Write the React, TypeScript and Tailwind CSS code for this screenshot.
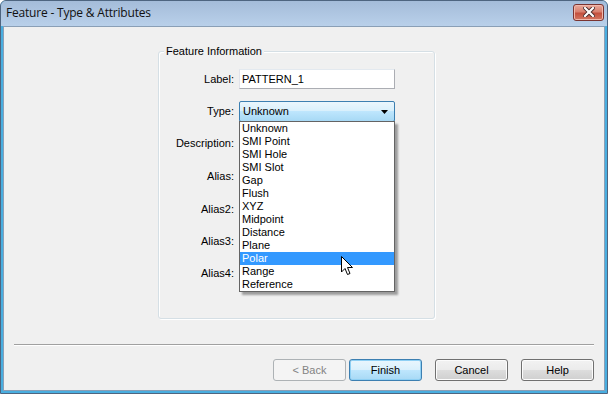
const items = [
  "Unknown",
  "SMI Point",
  "SMI Hole",
  "SMI Slot",
  "Gap",
  "Flush",
  "XYZ",
  "Midpoint",
  "Distance",
  "Plane",
  "Polar",
  "Range",
  "Reference",
];

function FieldRow({ label, mt, children }: { label: string; mt: string; children?: React.ReactNode }) {
  return (
    <div className={`flex items-center h-[20px] ${mt}`}>
      <div className="w-[76px] text-right pr-[1px]">{label}</div>
      <div className="ml-[4px] w-[156px] h-full">{children}</div>
    </div>
  );
}

function Btn({ label, kind }: { label: string; kind?: "default" | "disabled" }) {
  const base = "w-[73px] h-[22px] rounded-[3px] border flex items-center justify-center";
  if (kind === "disabled")
    return <div className={`${base} border-[#adb2b5] bg-[#f4f4f4] text-[#838383]`}>{label}</div>;
  if (kind === "default")
    return (
      <div className={`${base} border-[#3c7fb1] bg-[linear-gradient(#eaf6fd_0%,#d9f0fc_50%,#bee6fd_51%,#a7d9f5_100%)] shadow-[inset_0_0_0_1px_#8fd0f4]`}>
        {label}
      </div>
    );
  return (
    <div className={`${base} border-[#707070] bg-[linear-gradient(#f2f2f2_0%,#ebebeb_50%,#dddddd_51%,#cfcfcf_100%)] shadow-[inset_0_0_0_1px_#fcfcfc]`}>
      {label}
    </div>
  );
}

export default function App() {
  return (
    <div className="w-[608px] h-[394px] flex flex-col rounded-t-[6px] border border-[#4e6580] bg-[#49aee0] text-[11px] text-black font-['Liberation_Sans',Arial,sans-serif] overflow-hidden">
      {/* title bar */}
      <div className="h-[25px] shrink-0 flex items-center justify-between pl-[5px] pr-[3px] bg-[linear-gradient(#a4bcd9,#b9d0ea)]">
        <span className="text-[12px] text-[#111] font-['Open_Sans','Liberation_Sans',sans-serif] tracking-[-0.2px] mt-[-1px]">
          Feature - Type &amp; Attributes
        </span>
        <div className="w-[31px] h-[17px] mt-[-3px] rounded-[3px] border border-[#7a3431] bg-[linear-gradient(#e9a99b_0%,#d8806f_45%,#c4503e_55%,#d37763_100%)] shadow-[inset_0_0_0_1px_#f0b8ac] flex items-center justify-center">
          <svg width="12" height="10" viewBox="0 0 12 10">
            <path d="M2 1 L10 9 M10 1 L2 9" stroke="#4a2a2a" strokeWidth="4" strokeLinecap="square" />
            <path d="M2 1 L10 9 M10 1 L2 9" stroke="#ffffff" strokeWidth="2.2" strokeLinecap="square" />
          </svg>
        </div>
      </div>

      {/* client area */}
      <div className="flex-1 mx-[2px] mb-[2px] flex flex-col bg-[#f0f0f0] border border-[#8a9fb6]">
        {/* group box */}
        <div className="relative ml-[154px] mt-[24px] w-[277px] h-[268px] rounded-[3px] border border-[#d5dfe5] shadow-[inset_1px_1px_0_#ffffff,1px_1px_0_#ffffff]">
          <span className="absolute -top-[7px] left-[5px] px-[2px] bg-[#f0f0f0] leading-[13px]">Feature Information</span>
          <div className="pt-[17px]">
            <FieldRow label="Label:" mt="">
              <div className="h-full border border-[#abadb3] border-t-[#e3e9ef] border-l-[#e2e3ea] bg-white flex items-center pl-[2px]">
                PATTERN_1
              </div>
            </FieldRow>
            <div className="flex items-center h-[21px] mt-[12px]">
              <div className="w-[76px] text-right pr-[1px]">Type:</div>
              <div className="relative ml-[4px] w-[156px] h-full">
                <div className="h-full rounded-[2px] border border-[#3c7fb1] bg-[linear-gradient(#eaf6fd_0%,#d9f0fc_45%,#bee6fd_50%,#a7d9f5_100%)] flex items-center justify-between pl-[3px] pr-[5px]">
                  <span>Unknown</span>
                  <svg width="8" height="4" viewBox="0 0 8 4">
                    <path d="M0 0 H7 L3.5 4 Z" fill="#000" />
                  </svg>
                </div>
                {/* open dropdown list */}
                <div className="absolute left-0 top-[20px] w-[156px] z-10 border border-[#646464] bg-white shadow-[3px_3px_2px_rgba(0,0,0,0.35)]">
                  {items.map((it) => (
                    <div
                      key={it}
                      className={`h-[13px] leading-[13px] pl-[2px] ${it === "Polar" ? "bg-[#3399ff] text-white" : ""}`}
                    >
                      {it}
                    </div>
                  ))}
                </div>
              </div>
            </div>
            <FieldRow label="Description:" mt="mt-[11px]" />
            <FieldRow label="Alias:" mt="mt-[13px]" />
            <FieldRow label="Alias2:" mt="mt-[13px]" />
            <FieldRow label="Alias3:" mt="mt-[12px]" />
            <FieldRow label="Alias4:" mt="mt-[12px]" />
          </div>
          {/* mouse cursor */}
          <svg className="absolute left-[182px] top-[204px] z-20" width="13" height="20" viewBox="0 0 13 20">
            <path d="M0.5 0.5 V16 L4 12.5 L6.5 18.5 L9 17.5 L6.5 11.5 H11.5 Z" fill="#fff" stroke="#000" strokeWidth="1" strokeLinejoin="round" />
          </svg>
        </div>

        {/* separator */}
        <div className="mx-[10px] mt-[25px] h-[2px] border-t border-[#a0a0a0] border-b border-b-white" />

        {/* buttons */}
        <div className="flex justify-end pr-[10px] mt-[13px]">
          <Btn label="< Back" kind="disabled" />
          <div className="ml-[3px]">
            <Btn label="Finish" kind="default" />
          </div>
          <div className="ml-[13px]">
            <Btn label="Cancel" />
          </div>
          <div className="ml-[13px]">
            <Btn label="Help" />
          </div>
        </div>
      </div>
    </div>
  );
}
